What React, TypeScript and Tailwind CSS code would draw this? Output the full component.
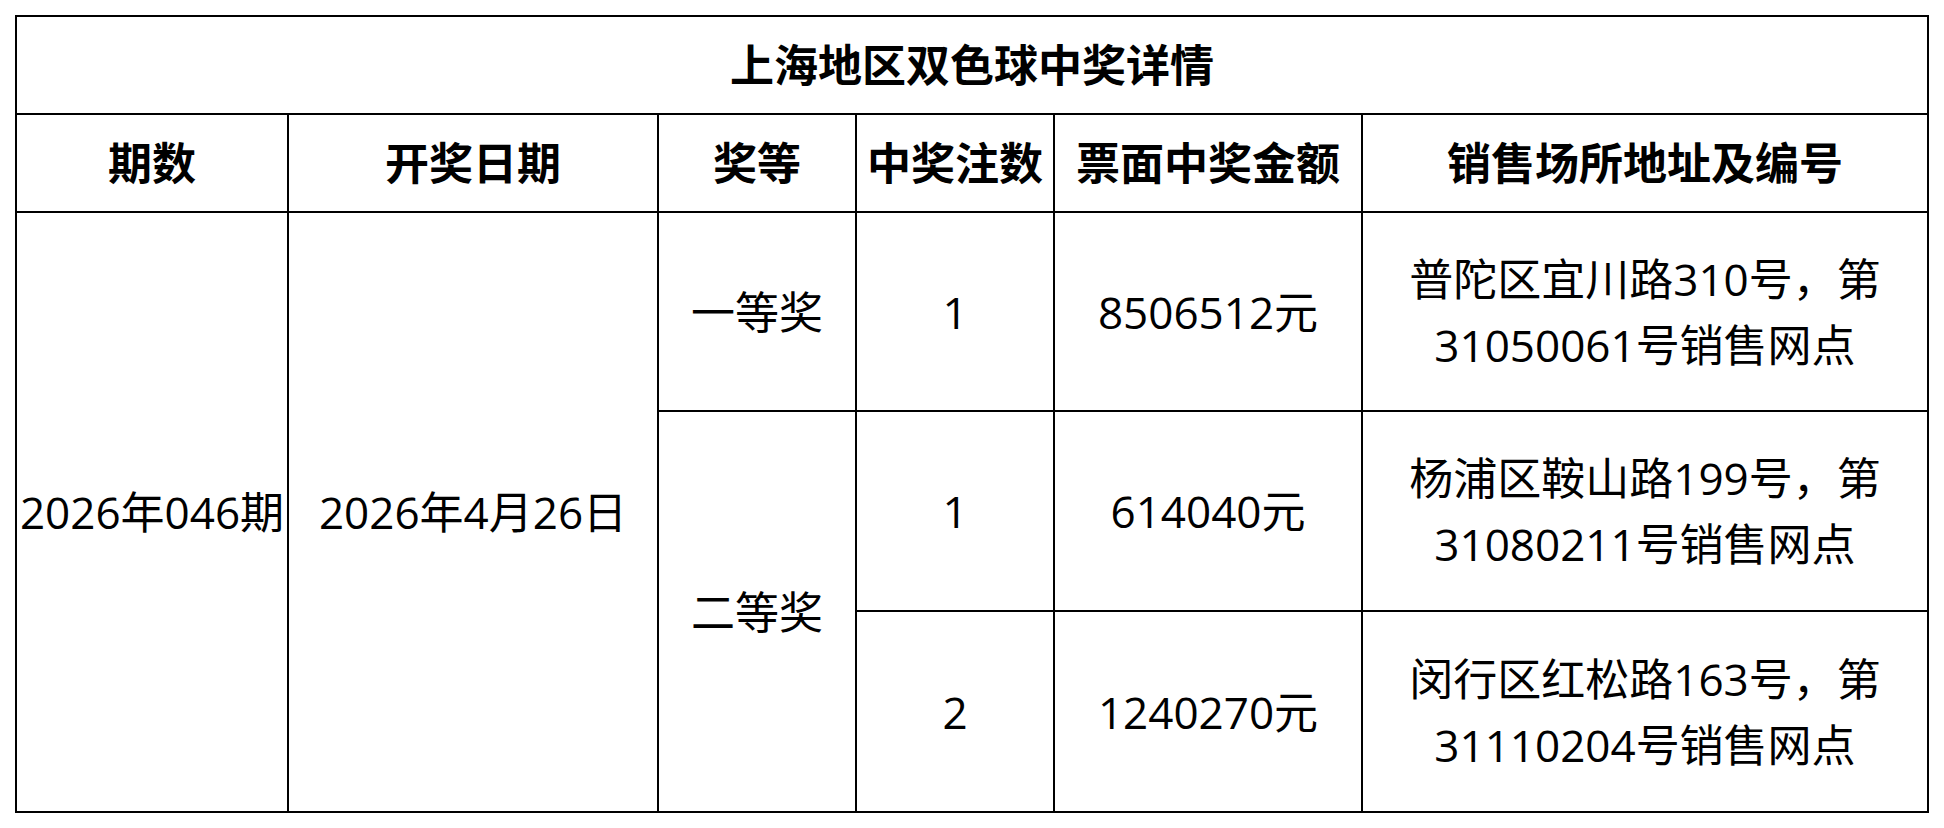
const font = {
  fontFamily: '"Open Sans", "Noto Sans CJK SC", sans-serif',
};

type Row = {
  count: string;
  amount: string;
  address: [string, string];
};

const rows: Row[] = [
  { count: "1", amount: "8506512元", address: ["普陀区宜川路310号，第", "31050061号销售网点"] },
  { count: "1", amount: "614040元", address: ["杨浦区鞍山路199号，第", "31080211号销售网点"] },
  { count: "2", amount: "1240270元", address: ["闵行区红松路163号，第", "31110204号销售网点"] },
];

const headers = ["期数", "开奖日期", "奖等", "中奖注数", "票面中奖金额", "销售场所地址及编号"];

function Cell({ children, className = "" }: { children: React.ReactNode; className?: string }) {
  return (
    <div className={`bg-white flex items-center justify-center text-center whitespace-nowrap ${className}`}>
      {children}
    </div>
  );
}

export default function App() {
  return (
    <div className="min-h-screen bg-white p-[15px] text-black" style={font}>
      <div className="grid w-fit grid-cols-[270px_368px_196px_196px_306px_564px] grid-rows-[96px_96px_197px_198px_199px] gap-[2px] bg-black p-[2px] text-[44px]">
        {/* title */}
        <Cell className="col-span-6 font-bold">上海地区双色球中奖详情</Cell>

        {/* header row */}
        {headers.map((h) => (
          <Cell key={h} className="font-bold">
            {h}
          </Cell>
        ))}

        {/* first prize row */}
        <Cell className="row-span-3">2026年046期</Cell>
        <Cell className="row-span-3">2026年4月26日</Cell>
        <Cell>一等奖</Cell>
        <Cell>{rows[0].count}</Cell>
        <Cell>{rows[0].amount}</Cell>
        <Cell className="leading-[66px]">
          <span>
            {rows[0].address[0]}
            <br />
            {rows[0].address[1]}
          </span>
        </Cell>

        {/* second prize rows */}
        <Cell className="row-span-2">二等奖</Cell>
        {rows.slice(1).map((r, i) => (
          <div key={i} className="contents">
            <Cell>{r.count}</Cell>
            <Cell>{r.amount}</Cell>
            <Cell className="leading-[66px]">
              <span>
                {r.address[0]}
                <br />
                {r.address[1]}
              </span>
            </Cell>
          </div>
        ))}
      </div>
    </div>
  );
}
